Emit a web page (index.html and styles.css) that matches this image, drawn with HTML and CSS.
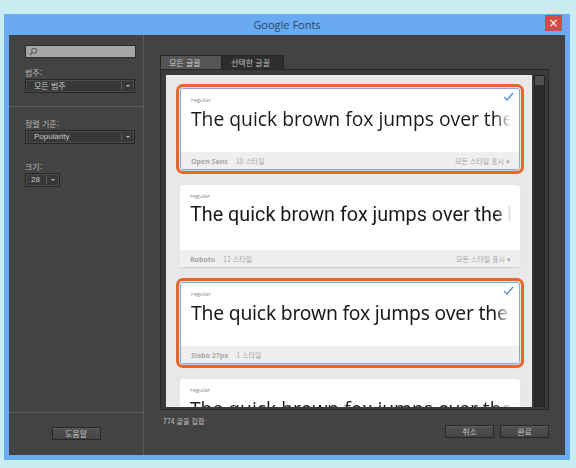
FILE: index.html
```html
<!DOCTYPE html>
<html lang="ko">
	<head>
		<meta charset="UTF-8" />
		<title>Google Fonts</title>
		<link rel="stylesheet" href="styles.css">
	</head>
	<body>
		<div class="window">
			<div class="titlebar">
				<span></span>
				<span class="title">Google Fonts</span>
				<span class="tb-right"><button class="close">&times;</button></span>
			</div>

			<div class="dialog">
				<!-- Sidebar -->
				<div class="sidebar">
					<div class="sb-top">
						<div class="search">
							<svg width="9" height="9" viewBox="0 0 9 9">
								<circle cx="5.2" cy="3.8" r="2.6" fill="none" stroke="#555" stroke-width="1" />
								<line x1="3.3" y1="5.7" x2="1" y2="8" stroke="#555" stroke-width="1.2" />
							</svg>
						</div>
						<div class="label">범주:</div>
						<div class="select wide"><span>모든 범주</span><i></i></div>
					</div>
					<div class="sb-mid">
						<div class="label">정렬 기준:</div>
						<div class="select wide"><span class="latin">Popularity</span><i></i></div>
						<div class="label gap">크기:</div>
						<div class="select small"><span class="latin">28</span><i></i></div>
					</div>
					<div class="sb-foot">
						<button class="btn">도움말</button>
					</div>
				</div>

				<!-- Main -->
				<div class="main">
					<div class="tabs">
						<div class="tab active">모든 글꼴</div>
						<div class="tab">선택한 글꼴</div>
					</div>
					<div class="panel">
						<div class="list">
							<div class="card selected">
								<div class="card-body">
									<div class="style">regular</div>
									<div class="preview f-open">The quick brown fox jumps over the lazy dog</div>
									<svg class="check" width="11" height="9" viewBox="0 0 11 9">
										<polyline points="1,5 4,8 10,1" fill="none" stroke="#5a8ee0" stroke-width="1.4" />
									</svg>
								</div>
								<div class="card-foot">
									<span><b>Open Sans</b> 10 스타일</span>
									<span>모든 스타일 표시 &#9662;</span>
								</div>
							</div>

							<div class="card">
								<div class="card-body">
									<div class="style">regular</div>
									<div class="preview f-roboto">The quick brown fox jumps over the lazy dog</div>
								</div>
								<div class="card-foot">
									<span><b>Roboto</b> 12 스타일</span>
									<span>모든 스타일 표시 &#9662;</span>
								</div>
							</div>

							<div class="card selected">
								<div class="card-body">
									<div class="style">regular</div>
									<div class="preview f-slabo">The quick brown fox jumps over the lazy dog</div>
									<svg class="check" width="11" height="9" viewBox="0 0 11 9">
										<polyline points="1,5 4,8 10,1" fill="none" stroke="#5a8ee0" stroke-width="1.4" />
									</svg>
								</div>
								<div class="card-foot">
									<span><b>Slabo 27px</b> 1 스타일</span>
								</div>
							</div>

							<div class="card">
								<div class="card-body">
									<div class="style">regular</div>
									<div class="preview f-open">The quick brown fox jumps over the lazy dog</div>
								</div>
							</div>
						</div>
						<div class="scrollbar"><div class="thumb"></div></div>
					</div>
					<div class="main-foot">
						<span class="count">774 글꼴 집합</span>
						<div class="actions">
							<button class="btn">취소</button>
							<button class="btn">완료</button>
						</div>
					</div>
				</div>
			</div>
		</div>
	</body>
</html>
```

FILE: styles.css
```css
body {
	margin: 0;
	background-color: #c8ecf0;
	font-family: "Noto Sans CJK KR", "Noto Sans", sans-serif;
}
.window {
	box-sizing: border-box;
	width: 566px;
	height: 446px;
	margin: 14px 0 0 4px;
	background-color: #6aaaf0;
	padding: 0 5px 5px 5px;
	display: flex;
	flex-direction: column;
}
.titlebar {
	height: 21px;
	display: grid;
	grid-template-columns: 1fr auto 1fr;
	align-items: start;
}
.title {
	font-family: "Open Sans", sans-serif;
	font-size: 11px;
	line-height: 21px;
	color: #28486a;
}
.tb-right {
	display: flex;
	justify-content: flex-end;
	padding-right: 3px;
}
.close {
	width: 17px;
	height: 16px;
	margin-top: 1px;
	padding: 0;
	border: none;
	background-color: #d24a4a;
	color: #fff;
	font-size: 12px;
	line-height: 14px;
	font-family: "DejaVu Sans", sans-serif;
}
.dialog {
	flex: 1;
	display: flex;
	background-color: #434343;
	min-height: 0;
}

/* Sidebar */
.sidebar {
	width: 134px;
	flex-shrink: 0;
	border-right: 1px solid #5b5b5b;
	display: flex;
	flex-direction: column;
}
.sb-top {
	padding: 10px 0 13px 16px;
	border-bottom: 1px solid #5b5b5b;
}
.sb-mid {
	flex: 1;
	padding: 11px 0 0 16px;
}
.sb-foot {
	height: 43px;
	border-top: 1px solid #5b5b5b;
	display: flex;
	justify-content: center;
	padding-top: 14px;
	box-sizing: border-box;
}
.search {
	width: 106px;
	height: 11px;
	background-color: #a6a6a6;
	border: 1px solid #2e2e2e;
	display: flex;
	align-items: center;
	padding-left: 3px;
	margin-bottom: 9px;
}
.search svg {
	display: block;
}
.label {
	font-size: 8px;
	line-height: 11px;
	color: #b8b8b8;
	margin-bottom: 1px;
}
.label.gap {
	margin-top: 17px;
}
.select {
	height: 12px;
	border: 1px solid #262626;
	background-color: #383838;
	box-shadow: inset 0 0 0 1px #4c4c4c;
	display: flex;
	align-items: center;
	color: #c8c8c8;
	font-size: 8px;
}
.select span {
	flex: 1;
	padding-left: 8px;
	line-height: 12px;
}
.select .latin {
	font-family: "Liberation Sans", sans-serif;
	font-size: 8px;
}
.select i {
	width: 12px;
	height: 8px;
	border-left: 1px solid #5c5c5c;
	position: relative;
}
.select i::after {
	content: "";
	position: absolute;
	left: 4px;
	top: 3px;
	border-left: 2px solid transparent;
	border-right: 2px solid transparent;
	border-top: 2px solid #bbb;
}
.select.wide {
	width: 108px;
}
.select.small {
	width: 33px;
}
.select.small span {
	padding-left: 5px;
}
.btn {
	height: 13px;
	padding: 0;
	border: 1px solid #282828;
	background: linear-gradient(#505050, #454545);
	box-shadow: inset 0 1px 0 #5e5e5e;
	color: #c4c4c4;
	font-family: "Noto Sans CJK KR", sans-serif;
	font-size: 8px;
	line-height: 11px;
	width: 49px;
}

/* Main */
.main {
	flex: 1;
	min-width: 0;
	padding: 20px 16px 0 16px;
	display: flex;
	flex-direction: column;
}
.tabs {
	display: flex;
	height: 14px;
}
.tab {
	width: 62px;
	font-size: 8px;
	line-height: 14px;
	padding-left: 8px;
	box-sizing: border-box;
	color: #bdbdbd;
	background-color: #2e2e2e;
	border: 1px solid #262626;
	border-bottom: none;
}
.tab.active {
	background-color: #555;
	color: #d0d0d0;
}
.panel {
	height: 341px;
	flex-shrink: 0;
	box-sizing: border-box;
	border: 1px solid #262626;
	background-color: #3a3a3a;
	padding: 5px 3px 2px 5px;
	display: flex;
	gap: 2px;
}
.list {
	flex: 1;
	min-width: 0;
	background-color: #e8e8e8;
	overflow: hidden;
	padding: 13px 12px 0 14px;
	display: flex;
	flex-direction: column;
	gap: 15px;
}
.scrollbar {
	width: 9px;
	background-color: #2c2c2c;
	border: 1px solid #222;
}
.thumb {
	height: 9px;
	background-color: #505050;
}
.card {
	flex-shrink: 0;
	height: 82px;
	background-color: #fff;
	border-radius: 3px;
	box-shadow: 0 1px 1px rgba(0, 0, 0, 0.12);
	display: flex;
	flex-direction: column;
	box-sizing: border-box;
	min-width: 0;
}
.card.selected {
	border: 1px solid #8aa4e6;
	outline: 3px solid #e6662e;
	outline-offset: 1px;
}
.card-body {
	flex: 1;
	position: relative;
	padding: 7px 8px 0 10px;
	overflow: hidden;
	min-width: 0;
}
.style {
	font-family: "Open Sans", sans-serif;
	font-size: 6px;
	color: #8c8c8c;
	line-height: 8px;
}
.preview {
	white-space: nowrap;
	overflow: hidden;
	font-size: 19.3px;
	line-height: 27px;
	color: #1a1a1a;
	margin-top: 1px;
	-webkit-mask-image: linear-gradient(to right, #000 95%, transparent 100%);
	mask-image: linear-gradient(to right, #000 95%, transparent 100%);
}
.f-open {
	font-family: "Open Sans", sans-serif;
}
.f-roboto {
	font-family: Roboto, sans-serif;
	font-size: 19.8px;
}
.f-slabo {
	font-family: "Noto Sans", sans-serif;
	letter-spacing: -0.2px;
}
.check {
	position: absolute;
	right: 5px;
	top: 3px;
}
.card-foot {
	height: 17px;
	background-color: #efefef;
	display: flex;
	justify-content: space-between;
	align-items: center;
	padding: 0 9px 0 10px;
	font-size: 7px;
	color: #a6a6a6;
}
.card-foot b {
	font-family: "Open Sans", sans-serif;
	margin-right: 6px;
}
.main-foot {
	display: flex;
	justify-content: space-between;
	padding-top: 6px;
}
.count {
	font-size: 7px;
	line-height: 10px;
	color: #c0c0c0;
	padding-left: 3px;
}
.actions {
	display: flex;
	gap: 6px;
	padding-top: 9px;
}
```
